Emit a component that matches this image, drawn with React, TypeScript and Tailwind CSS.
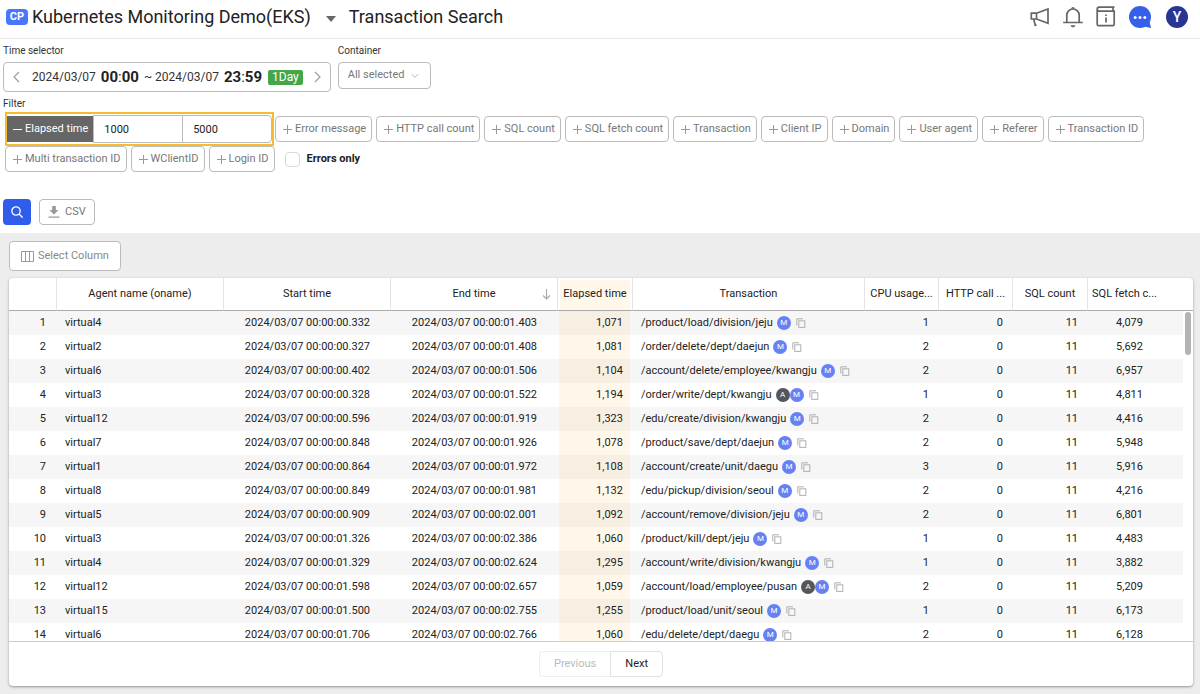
import { useState } from 'react';

const rows = [
  { agent: 'virtual4', start: '00.332', end: '01.403', elapsed: '1,071', path: '/product/load/division/jeju', badges: ['M'], cpu: 1, fetch: '4,079' },
  { agent: 'virtual2', start: '00.327', end: '01.408', elapsed: '1,081', path: '/order/delete/dept/daejun', badges: ['M'], cpu: 2, fetch: '5,692' },
  { agent: 'virtual6', start: '00.402', end: '01.506', elapsed: '1,104', path: '/account/delete/employee/kwangju', badges: ['M'], cpu: 2, fetch: '6,957' },
  { agent: 'virtual3', start: '00.328', end: '01.522', elapsed: '1,194', path: '/order/write/dept/kwangju', badges: ['A', 'M'], cpu: 1, fetch: '4,811' },
  { agent: 'virtual12', start: '00.596', end: '01.919', elapsed: '1,323', path: '/edu/create/division/kwangju', badges: ['M'], cpu: 2, fetch: '4,416' },
  { agent: 'virtual7', start: '00.848', end: '01.926', elapsed: '1,078', path: '/product/save/dept/daejun', badges: ['M'], cpu: 2, fetch: '5,948' },
  { agent: 'virtual1', start: '00.864', end: '01.972', elapsed: '1,108', path: '/account/create/unit/daegu', badges: ['M'], cpu: 3, fetch: '5,916' },
  { agent: 'virtual8', start: '00.849', end: '01.981', elapsed: '1,132', path: '/edu/pickup/division/seoul', badges: ['M'], cpu: 2, fetch: '4,216' },
  { agent: 'virtual5', start: '00.909', end: '02.001', elapsed: '1,092', path: '/account/remove/division/jeju', badges: ['M'], cpu: 2, fetch: '6,801' },
  { agent: 'virtual3', start: '01.326', end: '02.386', elapsed: '1,060', path: '/product/kill/dept/jeju', badges: ['M'], cpu: 1, fetch: '4,483' },
  { agent: 'virtual4', start: '01.329', end: '02.624', elapsed: '1,295', path: '/account/write/division/kwangju', badges: ['M'], cpu: 1, fetch: '3,882' },
  { agent: 'virtual12', start: '01.598', end: '02.657', elapsed: '1,059', path: '/account/load/employee/pusan', badges: ['A', 'M'], cpu: 2, fetch: '5,209' },
  { agent: 'virtual15', start: '01.500', end: '02.755', elapsed: '1,255', path: '/product/load/unit/seoul', badges: ['M'], cpu: 1, fetch: '6,173' },
  { agent: 'virtual6', start: '01.706', end: '02.766', elapsed: '1,060', path: '/edu/delete/dept/daegu', badges: ['M'], cpu: 2, fetch: '6,128' },
];

const filters = [
  'Error message',
  'HTTP call count',
  'SQL count',
  'SQL fetch count',
  'Transaction',
  'Client IP',
  'Domain',
  'User agent',
  'Referer',
  'Transaction ID',
  'Multi transaction ID',
  'WClientID',
  'Login ID',
];

const Chevron = ({ d, className }: { d: string; className: string }) => (
  <svg viewBox="0 0 12 12" className={className} fill="none" stroke="currentColor" strokeWidth="1.1">
    <path d={d} />
  </svg>
);

const CopyIcon = () => (
  <svg viewBox="0 0 10 10" className="w-[10px] h-[10px]" fill="none" stroke="#b0b0b0">
    <path d="M.8 7.5V.8H7" />
    <rect x="2.8" y="2.8" width="6" height="6.6" />
  </svg>
);

const Header = () => (
  <header className="flex items-center justify-between h-[39px] shrink-0 border-b border-[#e8e8e8] pl-[6px] pr-3 pb-[5px]">
    <div className="flex items-center text-[18px] leading-6 text-[#222]">
      <span className="w-[22px] h-4 mr-1 rounded bg-[#4a76fd] text-white text-[11px] leading-4 font-bold text-center">
        CP
      </span>
      <button type="button" className="flex items-center gap-[15px]">
        <span>Kubernetes Monitoring Demo(EKS)</span>
        <svg viewBox="0 0 10 6" className="w-[10px] h-[6px] mt-1" fill="#666">
          <path d="M0 0h10L5 6z" />
        </svg>
      </button>
      <h1 className="ml-[13px]">Transaction Search</h1>
    </div>

    <div className="flex items-center gap-[13px] text-[#666]">
      <button type="button" aria-label="Announcements">
        <svg viewBox="0 0 20 20" className="w-5 h-5" fill="none" stroke="currentColor" strokeWidth="1.7">
          <path d="M1.300 6.200h5.200v5.800H1.300zM6.500 6.200l11.500-4.200v14.200L6.500 12M3.700 12l1.500 6.300 1.300-.2" />
        </svg>
      </button>
      <button type="button" aria-label="Notifications">
        <svg viewBox="0 0 20 22" className="w-5 h-[22px]" fill="none" stroke="currentColor" strokeWidth="1.7">
          <path d="M.2 16.500h19.600M3.800 16.500V9.200a6.200 6.200 0 0 1 12.400 0v7.300" />
          <path d="M8.300 2.800a1.700 1.700 0 0 1 3.400 0zM7.500 19.200h5c-.8 2.700-4.200 2.700-5 0z" fill="currentColor" stroke="none" />
        </svg>
      </button>
      <button type="button" aria-label="Release notes">
        <svg viewBox="0 0 20 21" className="w-5 h-[21px]" fill="none" stroke="currentColor" strokeWidth="1.7">
          <path d="M18.500 1.200H3.200a2 2 0 0 0-2 2v15a1.500 1.500 0 0 0 1.500 1.500h14a1.500 1.500 0 0 0 1.500-1.500V5.200H3.200a2 2 0 0 1-2-2M17 1.500v3.500" />
          <path d="M10 8.500v1.600M10 11.500v5" />
        </svg>
      </button>
      <button type="button" aria-label="Chat">
        <svg viewBox="0 0 22 22" className="w-[22px] h-[22px]">
          <circle cx="11" cy="11" r="11" fill="#3561ea" />
          <path d="M20.500 15.500L22 22l-7-1.500z" fill="#3561ea" />
          <g fill="#fff">
            <circle cx="6.200" cy="11.500" r="1.500" />
            <circle cx="11" cy="11.500" r="1.500" />
            <circle cx="15.800" cy="11.500" r="1.500" />
          </g>
        </svg>
      </button>
      <button type="button" className="w-[22px] h-[22px] ml-[2px] rounded-full bg-[#283593] text-white text-[14px] font-medium leading-[22px]">
        Y
      </button>
    </div>
  </header>
);

const SearchConditions = () => {
  const [min, setMin] = useState('1000');
  const [max, setMax] = useState('5000');
  const [errorsOnly, setErrorsOnly] = useState(false);

  return (
    <section className="shrink-0 px-[3px] pt-[5px] pb-2 text-[#333]">
      <div className="flex gap-[7px]">
        <div>
          <p className="text-[10px] leading-[14px]">Time selector</p>
          <div className="flex items-center h-[30px] mt-1 px-[7px] rounded border border-[#bbb] text-[12px]">
            <button type="button" aria-label="Previous day" className="text-[#999]">
              <Chevron d="M8 1L3 6l5 5" className="w-3 h-3" />
            </button>
            <span className="ml-[9px]">2024/03/07</span>
            <span className="ml-[5px] text-[15px] text-[#222]"><b>00</b>:<b>00</b></span>
            <span className="ml-[5px]">~ 2024/03/07</span>
            <span className="ml-[5px] text-[15px] text-[#222]"><b>23</b>:<b>59</b></span>
            <span className="ml-[6px] px-1 h-[15px] leading-[15px] rounded-xs bg-[#43a648] text-white text-[12px]">1Day</span>
            <button type="button" aria-label="Next day" className="ml-2 text-[#999]">
              <Chevron d="M4 1l5 5-5 5" className="w-3 h-3" />
            </button>
          </div>
        </div>
        <div>
          <label htmlFor="container" className="block text-[10px] leading-[14px]">Container</label>
          <div className="relative mt-1">
            <select
              id="container"
              className="block appearance-none h-[27px] w-[93px] pl-[9px] rounded border border-[#bbb] bg-white text-[11px] text-[#777]"
            >
              <option>All selected</option>
            </select>
            <Chevron d="M1 3l5 5 5-5" className="absolute right-3 top-[10px] w-2 h-2 text-[#999] pointer-events-none" />
          </div>
        </div>
      </div>

      <p className="mt-[5px] text-[10px] leading-[14px]">Filter</p>
      <div className="flex flex-wrap items-center gap-x-[4px] mt-px pl-[2px] text-[11px]">
        <div className="flex items-center h-[34px] w-[269px] -mr-[3px] border-2 border-[#f5bd2d]">
          <button type="button" className="flex items-center h-[26px] pl-[6px] pr-[5px] gap-[3px] bg-[#666] text-white whitespace-nowrap">
            <svg viewBox="0 0 9 9" className="w-[9px] h-[9px]" stroke="currentColor">
              <path d="M0 4.500h9" />
            </svg>
            Elapsed time
          </button>
          <input
            aria-label="Minimum elapsed time"
            value={min}
            onChange={(e) => setMin(e.target.value)}
            className="flex-1 min-w-0 h-7 px-[10px] border border-r-0 border-[#bbb] text-[#222]"
          />
          <input
            aria-label="Maximum elapsed time"
            value={max}
            onChange={(e) => setMax(e.target.value)}
            className="flex-1 min-w-0 h-7 px-[10px] rounded-r border border-[#bbb] text-[#222]"
          />
        </div>
        {filters.map((name) => (
          <button
            key={name}
            type="button"
            className="flex items-center h-[26px] pl-[7px] pr-[5px] gap-[3px] rounded border border-[#bbb] text-[#777] whitespace-nowrap"
          >
            <svg viewBox="0 0 9 9" className="w-[9px] h-[9px]" stroke="#999">
              <path d="M0 4.500h9M4.500 0v9" />
            </svg>
            {name}
          </button>
        ))}
        <label className="flex items-center gap-[7px] ml-[6px] font-bold text-[#222]">
          <input
            type="checkbox"
            checked={errorsOnly}
            onChange={(e) => setErrorsOnly(e.target.checked)}
            className="appearance-none w-[15px] h-[15px] rounded border border-[#d9d9d9] checked:bg-[#3561ea]"
          />
          Errors only
        </label>
      </div>

      <div className="flex gap-2 mt-[27px] text-[11px]">
        <button type="button" aria-label="Search" className="flex items-center justify-center w-7 h-[26px] rounded bg-[#2f5ceb] text-white">
          <svg viewBox="0 0 12 12" className="w-3 h-3" fill="none" stroke="currentColor" strokeWidth="1.3">
            <circle cx="5" cy="5" r="4.200" />
            <path d="M8 8l3.600 3.600" />
          </svg>
        </button>
        <button type="button" className="flex items-center h-[26px] px-2 gap-[5px] rounded border border-[#bbb] text-[#777]">
          <svg viewBox="0 0 12 12" className="w-3 h-3" fill="#999">
            <path d="M4.200 0h3.600v4h2.700L6 8.500 1.500 4h2.700zM.5 10.500h11v1.200H.5z" />
          </svg>
          CSV
        </button>
      </div>
    </section>
  );
};

const headCell = 'h-[33px] p-0 font-normal text-center whitespace-nowrap border-b border-b-[#aaa]';
const divider = 'border-l border-l-[#e4e4e4]';

const TransactionTable = () => (
  <table className="w-full table-fixed border-separate border-spacing-0 text-[11px] leading-4 text-[#222]">
    <colgroup>
      <col className="w-[47px]" />
      <col className="w-[167px]" />
      <col className="w-[167px]" />
      <col className="w-[167px]" />
      <col className="w-[75px]" />
      <col />
      <col className="w-[74px]" />
      <col className="w-[74px]" />
      <col className="w-[75px]" />
      <col className="w-[96px]" />
      <col className="w-[10px]" />
    </colgroup>
    <thead>
      <tr>
        <th className={headCell} aria-label="Row" />
        <th className={`${headCell} ${divider}`}>Agent name (oname)</th>
        <th className={`${headCell} ${divider}`}>Start time</th>
        <th className={`${headCell} ${divider}`}>
          <div className="flex items-center">
            <span className="flex-1 pl-[15px]">End time</span>
            <svg viewBox="0 0 9 12" className="w-[9px] h-3 mr-[6px]" fill="none" stroke="#aaa" strokeWidth="1.200">
              <path d="M4.500 1v10M1 7.500L4.500 11 8 7.500" />
            </svg>
          </div>
        </th>
        <th className={`${headCell} ${divider}`}>
          <div className="mx-[2px] h-[30px] leading-[28px] mt-[2px] bg-[#ffae2b]/10">Elapsed time</div>
        </th>
        <th className={`${headCell} ${divider}`}>Transaction</th>
        <th className={`${headCell} ${divider}`}>CPU usage...</th>
        <th className={`${headCell} ${divider}`}>HTTP call ...</th>
        <th className={`${headCell} ${divider}`}>SQL count</th>
        <th className={`${headCell} ${divider}`}>
          <div className="pr-[22px]">SQL fetch c...</div>
        </th>
        <th className={headCell} aria-label="Scroll" />
      </tr>
    </thead>
    <tbody>
      {rows.map((row, i) => (
        <tr key={row.start + row.path} className="h-6 *:p-0 odd:[&>td:not(:last-child)]:bg-[#f6f6f6]">
          <td className="text-right"><div className="pr-[10px]">{i + 1}</div></td>
          <td><div className="pl-[9px]">{row.agent}</div></td>
          <td className="text-right"><div className="pr-5">2024/03/07 00:00:{row.start}</div></td>
          <td className="text-right"><div className="pr-5">2024/03/07 00:00:{row.end}</div></td>
          <td className="text-right">
            <div className="mx-[2px] h-6 leading-6 pr-[7px] bg-[#ffae2b]/10">{row.elapsed}</div>
          </td>
          <td>
            <div className="flex items-center pl-[9px]">
              <span className="mr-1">{row.path}</span>
              {row.badges.map((b) => (
                <span
                  key={b}
                  className={`w-[14px] h-[14px] rounded-full text-white text-[8px] leading-[14px] text-center ${
                    b === 'A' ? 'bg-[#55565c]' : 'bg-[#6681f4]'
                  }`}
                >
                  {b}
                </span>
              ))}
              <button type="button" aria-label="Copy" className="ml-[5px]">
                <CopyIcon />
              </button>
            </div>
          </td>
          <td className="text-right"><div className="pr-[9px]">{row.cpu}</div></td>
          <td className="text-right"><div className="pr-[9px]">0</div></td>
          <td className="text-right"><div className="pr-[9px]">11</div></td>
          <td className="text-right"><div className="pr-10">{row.fetch}</div></td>
          <td />
        </tr>
      ))}
    </tbody>
  </table>
);

const App = () => {
  return (
    <div className="flex flex-col h-screen bg-white font-['Roboto',sans-serif]">
      <Header />
      <SearchConditions />

      <main className="flex flex-col flex-1 min-h-0 py-2 pl-[9px] pr-[7px] bg-[#ededed]">
        <button
          type="button"
          className="flex items-center self-start shrink-0 h-[30px] px-[11px] gap-1 rounded border border-[#bbb] bg-white text-[11px] text-[#888]"
        >
          <svg viewBox="0 0 13 11" className="w-[13px] h-[11px]" fill="none" stroke="#999">
            <path d="M.5.500h12v10H.5zM4.500.500v10M8.500.500v10" />
          </svg>
          Select Column
        </button>

        <div className="flex flex-col flex-1 min-h-0 mt-[7px] rounded bg-white shadow-sm shadow-black/30">
          <div className="relative flex-1 min-h-0 overflow-hidden border-b border-[#ccc]">
            <TransactionTable />
            <div className="absolute right-[2px] top-[34px] w-[6px] h-[43px] rounded bg-[#b3b3b3]" />
          </div>
          <nav className="flex justify-center items-center h-[44px] shrink-0 text-[11px]">
            <button type="button" disabled className="h-[26px] px-[14px] rounded-l border border-r-0 border-[#eee] text-[#bbb]">
              Previous
            </button>
            <button type="button" className="h-[26px] px-[14px] rounded-r border border-[#e2e2e2] text-[#222]">
              Next
            </button>
          </nav>
        </div>
      </main>
    </div>
  );
};

export default App;
